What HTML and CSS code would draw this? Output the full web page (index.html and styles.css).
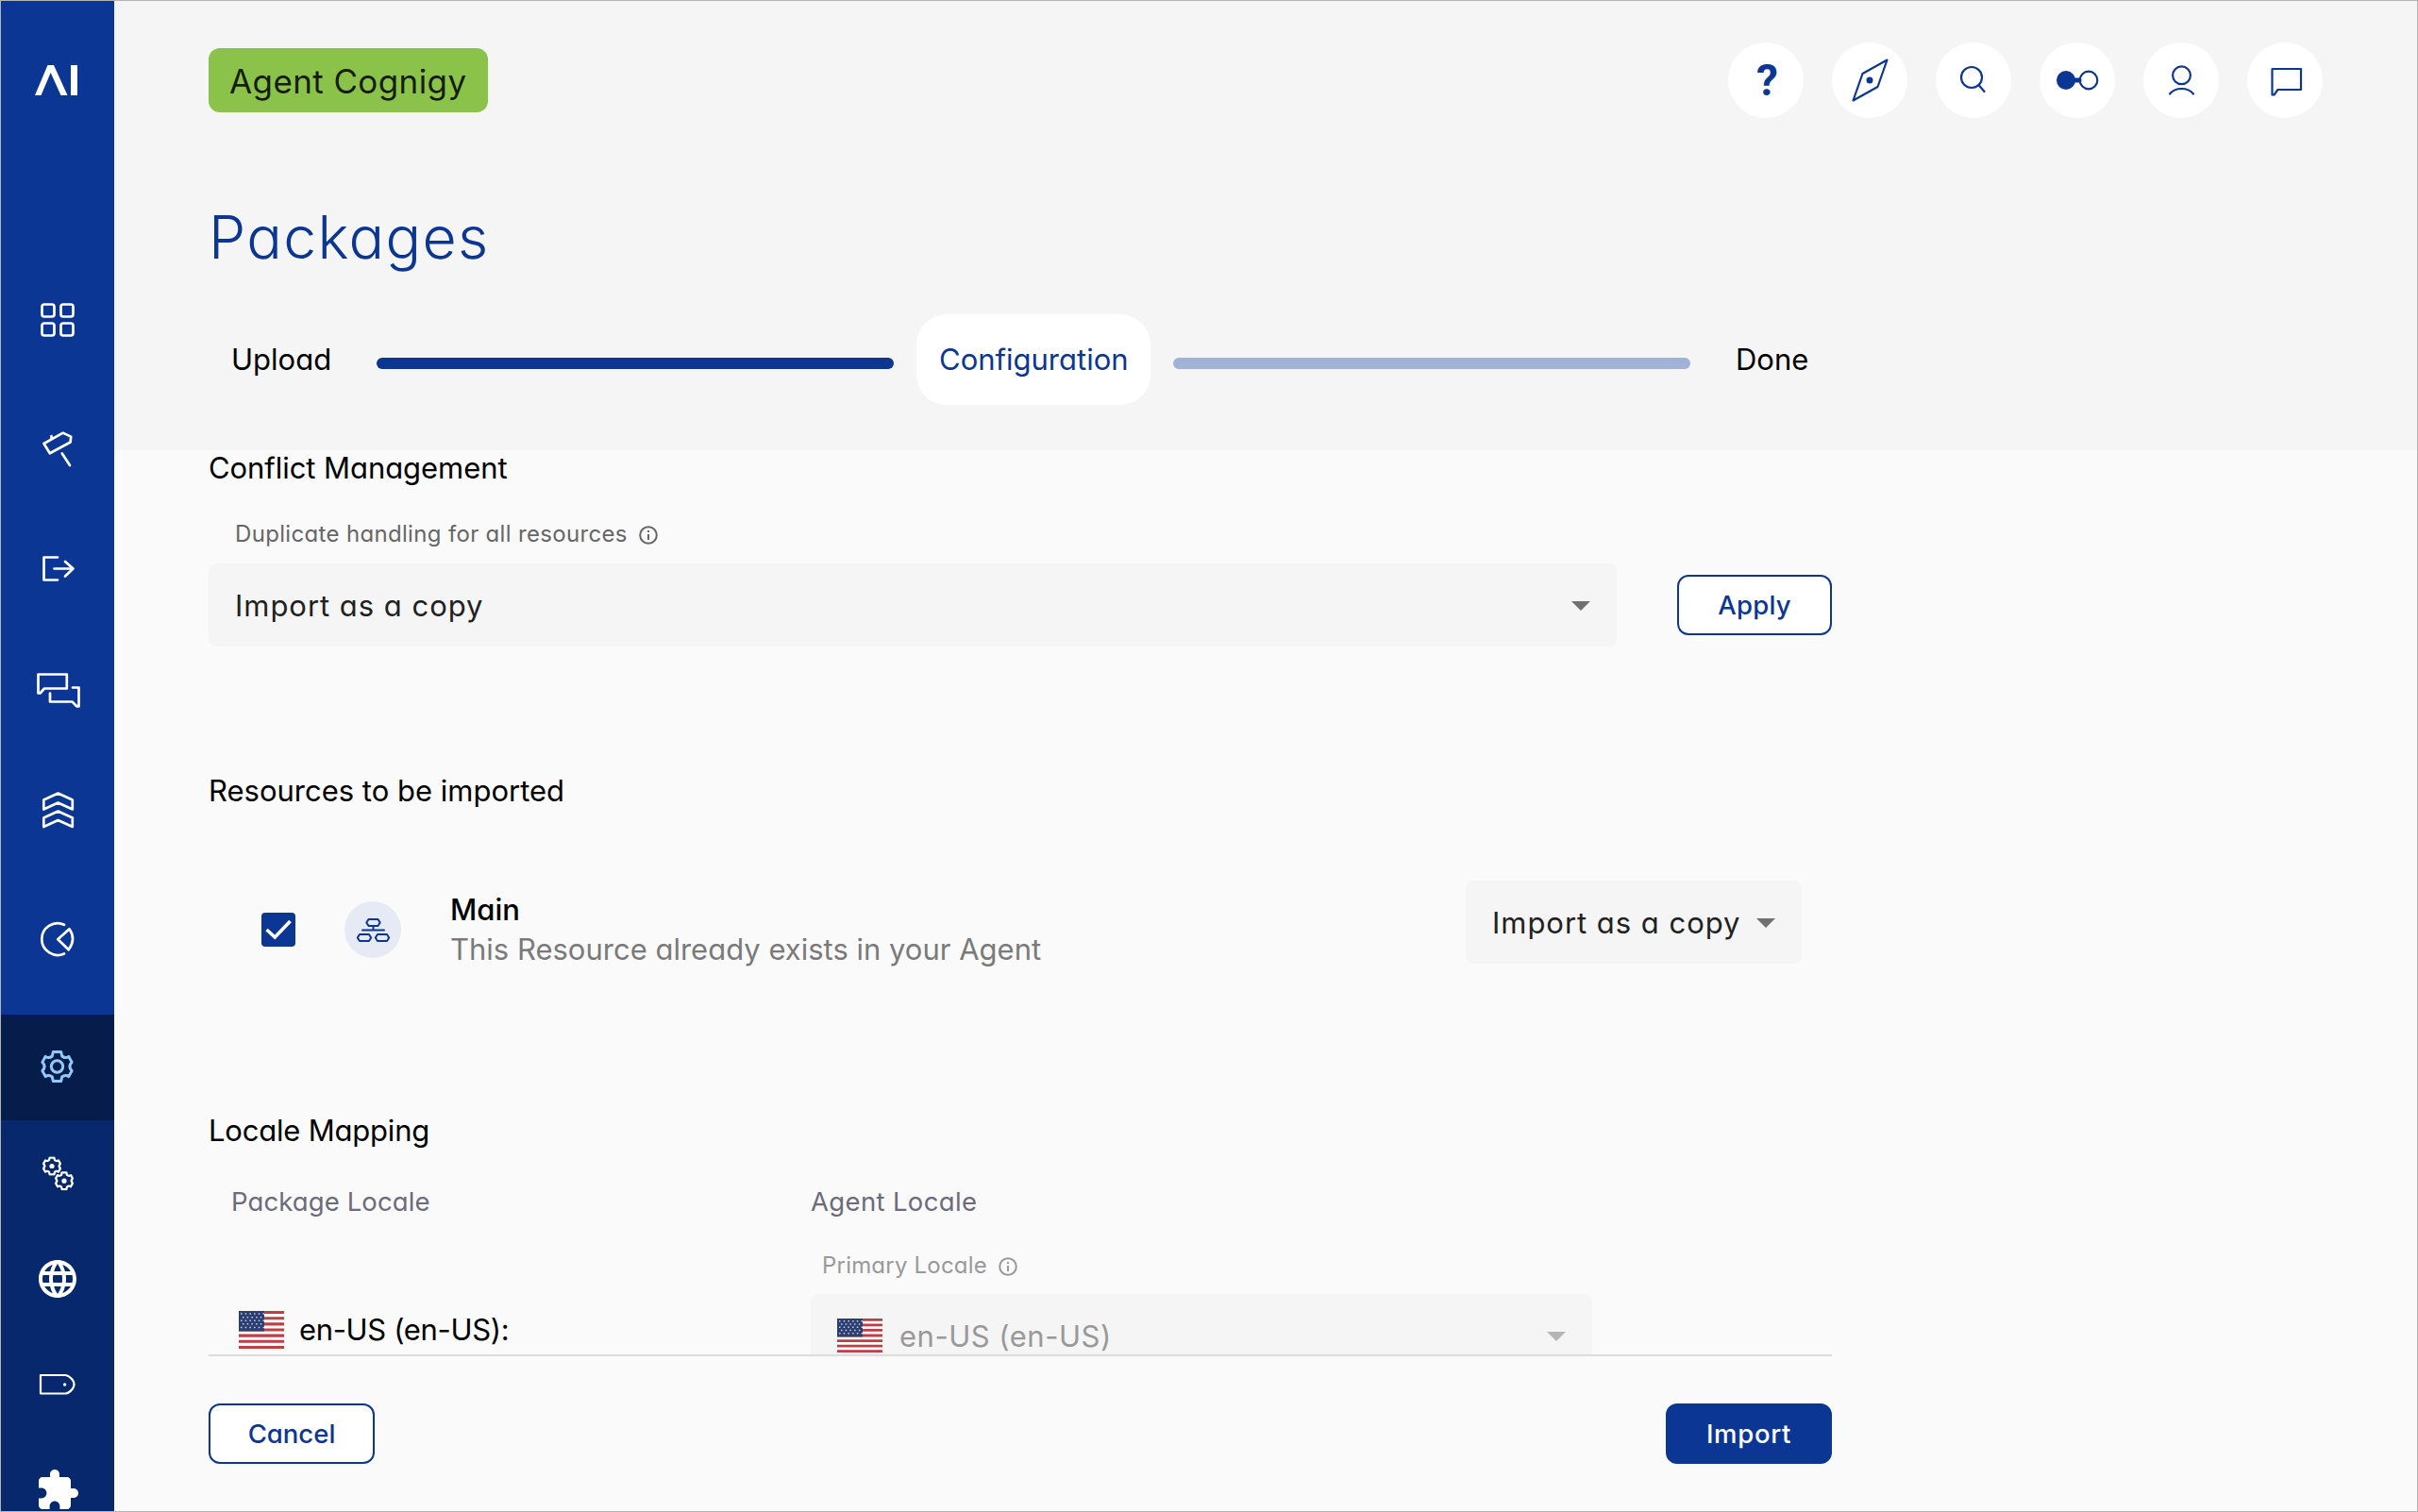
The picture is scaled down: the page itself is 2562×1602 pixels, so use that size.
FILE: index.html
```html
<!DOCTYPE html>
<html lang="en">
<head>
<meta charset="utf-8">
<title>Packages</title>
<link rel="stylesheet" href="styles.css">
</head>
<body>
<svg class="defs" width="0" height="0" aria-hidden="true">
  <symbol id="flag-us" viewBox="0 0 48 39" preserveAspectRatio="none">
    <rect width="48" height="39" fill="#fff"/>
    <path d="M0 1.5h48M0 7.5h48M0 13.5h48M0 19.5h48M0 25.5h48M0 31.5h48M0 37.5h48" stroke="#bf3f47" stroke-width="3"/>
    <rect width="27" height="21" fill="#2b3f73"/>
    <path d="M2 3h25M4 6.5h21M2 10h25M4 13.5h21M2 17h25" stroke="#c9cfdf" stroke-width="1.5" stroke-dasharray="1.5 3.2"/>
  </symbol>
  <symbol id="info" viewBox="0 0 20 20">
    <circle cx="10" cy="10" r="8.8" fill="none" stroke="currentColor" stroke-width="2"/>
    <path d="M10 9v6M10 5v2" stroke="currentColor" stroke-width="2"/>
  </symbol>
  <symbol id="gear" viewBox="-18 -18 36 36">
    <path d="M-4.2-15.5H4.2L5.2-11Q8.5-8.2 12.3-10.6L15.6-4.6Q11.2 0 15.6 4.6L12.3 10.6Q8.5 8.2 5.2 11L4.2 15.5H-4.2L-5.2 11Q-8.5 8.2-12.3 10.6L-15.6 4.6Q-11.2 0-15.6-4.6L-12.3-10.6Q-8.5-8.2-5.2-11Z"/>
  </symbol>
</svg>
<div class="app">
  <nav class="sidebar">
    <div class="nav-main">
      <svg class="logo" viewBox="37 61 48 48"><path fill="#fff" d="M37 101 50.5 69H57L71.5 101H64.5L53.7 77 43.5 101ZM75 69h7v32h-7Z"/></svg>
      <svg class="n1" viewBox="37 315 48 48"><rect x="44.5" y="322.5" width="13" height="13" rx="2.5"/><rect x="64.5" y="322.5" width="13" height="13" rx="2.5"/><rect x="44.5" y="342.5" width="13" height="13" rx="2.5"/><rect x="64.5" y="342.5" width="13" height="13" rx="2.5"/></svg>
      <svg class="n2" viewBox="37 452 48 48"><path d="M46.5 470 66.7 458.6 75.2 462.6 74.6 468.5 52.8 480.3ZM54.5 462v2.5M65.8 480.5 74 493"/></svg>
      <svg class="n3" viewBox="37 578 48 48"><path d="M61 590.5H46.5V614.5H61M57.5 602.5H77.5M69 595 77.5 602.5 69 610.5"/></svg>
      <svg class="n4" viewBox="37 707 48 48"><path d="M40.5 714.5H70.8V729.5H47L42.5 734.5H40.5ZM77 728.5H83.5V748.5H81.5L76.5 743.5H53V734.5"/></svg>
      <svg class="n5" viewBox="37 834 48 48"><path d="M46.3 847.5 61.5 840.5 76.8 847.5V857.5L61.5 850.5 46.3 857.5ZM46.3 866.5 61.5 859.5 76.8 866.5V876L61.5 869 46.3 876Z"/></svg>
      <svg class="n6" viewBox="37 971 48 48"><path d="M68 979.8A16.8 16.8 0 1 0 68 1010.4M61.3 995.3 73.5 984.3Q81 995 72.7 1006.3Z"/></svg>
    </div>
    <div class="nav-active">
      <svg class="cog" viewBox="37 1106 48 48"><use href="#gear" x="42.5" y="1112" width="36" height="36"/><circle cx="60.5" cy="1130" r="6.2"/></svg>
    </div>
    <div class="nav-sub">
      <svg viewBox="37 1219 48 48"><g class="thick"><use href="#gear" x="44.7" y="1225.2" width="20.6" height="20.6"/><use href="#gear" x="57.7" y="1240.9" width="20.6" height="20.6"/></g><circle class="dot" cx="55" cy="1235.5" r="2.6"/><circle class="dot" cx="68" cy="1251.2" r="2.6"/></svg>
      <svg viewBox="0 0 24 24"><path class="solid" d="M11.99 2C6.47 2 2 6.48 2 12s4.47 10 9.99 10C17.52 22 22 17.52 22 12S17.52 2 11.99 2zm6.93 6h-2.95c-.32-1.25-.78-2.45-1.38-3.56 1.84.63 3.37 1.91 4.33 3.56zM12 4.04c.83 1.2 1.48 2.53 1.91 3.96h-3.82c.43-1.43 1.08-2.76 1.91-3.96zM4.26 14C4.1 13.36 4 12.69 4 12s.1-1.36.26-2h3.38c-.08.66-.14 1.32-.14 2 0 .68.06 1.34.14 2H4.26zm.82 2h2.95c.32 1.25.78 2.45 1.38 3.56-1.84-.63-3.37-1.9-4.33-3.56zm2.95-8H5.08c.96-1.66 2.49-2.93 4.33-3.56C8.81 5.55 8.35 6.75 8.03 8zM12 19.96c-.83-1.2-1.48-2.53-1.91-3.96h3.82c-.43 1.43-1.08 2.76-1.91 3.96zM14.34 14H9.66c-.09-.66-.16-1.32-.16-2 0-.68.07-1.35.16-2h4.68c.09.65.16 1.32.16 2 0 .68-.07 1.34-.16 2zm.25 5.56c.6-1.11 1.06-2.31 1.38-3.56h2.95c-.96 1.65-2.49 2.93-4.33 3.56zM16.36 14c.08-.66.14-1.32.14-2 0-.68-.06-1.34-.14-2h3.38c.16.64.26 1.31.26 2s-.1 1.36-.26 2h-3.38z"/></svg>
      <svg viewBox="37 1443 48 48"><path class="thin" d="M43 1457H69.5Q73 1457.3 76.5 1461.5Q80.5 1467 76.5 1472Q73 1476.2 69.5 1476.5H43Z"/><circle class="dot" cx="68.6" cy="1467" r="1.7"/></svg>
      <svg viewBox="0 0 24 24"><path class="solid" d="M20.5 11H19V7c0-1.1-.9-2-2-2h-4V3.5C13 2.12 11.88 1 10.5 1S8 2.12 8 3.5V5H4c-1.1 0-1.99.9-1.99 2v3.8H3.5c1.49 0 2.7 1.21 2.7 2.7s-1.21 2.7-2.7 2.7H2V20c0 1.1.9 2 2 2h3.8v-1.5c0-1.49 1.21-2.7 2.7-2.7 1.49 0 2.7 1.21 2.7 2.7V22H17c1.1 0 2-.9 2-2v-4h1.5c1.38 0 2.5-1.12 2.5-2.5S21.88 11 20.5 11z"/></svg>
    </div>
  </nav>
  <main class="main">
    <header class="header">
      <div class="topbar">
        <div class="badge">Agent Cognigy</div>
        <div class="actions">
          <button class="circle help">?</button>
          <button class="circle"><svg viewBox="1941 45 80 80"><path d="M1999.5 63.5 1973.5 78 1963.5 106.5 1989.5 92Z"/><circle class="dot" cx="1981" cy="85" r="3.5"/></svg></button>
          <button class="circle"><svg viewBox="2051 45 80 80"><circle cx="2089" cy="82" r="11"/><path d="M2096.5 90 2102.5 97"/></svg></button>
          <button class="circle"><svg viewBox="2161 45 80 80"><circle class="dot" cx="2189" cy="85" r="10"/><path class="bar" d="M2195 85h8"/><circle cx="2213" cy="85" r="9.3"/></svg></button>
          <button class="circle"><svg viewBox="2271 45 80 80"><circle cx="2311.5" cy="79.8" r="9.4"/><path d="M2299 99.5Q2303.5 94 2311.5 94T2324 99.5"/></svg></button>
          <button class="circle"><svg viewBox="2381 45 80 80"><path d="M2407.5 73H2438V95H2413.5L2409.5 100.5H2407.5Z"/></svg></button>
        </div>
      </div>
      <h1 class="title">Packages</h1>
      <div class="stepper">
        <div class="step step-upload">Upload</div>
        <div class="progress done"></div>
        <div class="step current">Configuration</div>
        <div class="progress"></div>
        <div class="step step-done">Done</div>
      </div>
    </header>
    <section class="content">
      <h2 class="heading conflict">Conflict Management</h2>
      <div class="label"><span>Duplicate handling for all resources</span><svg class="info"><use href="#info"/></svg></div>
      <div class="conflict-row">
        <div class="select"><span>Import as a copy</span><i class="arrow"></i></div>
        <button class="btn apply">Apply</button>
      </div>
      <h2 class="heading resources">Resources to be imported</h2>
      <div class="resource">
        <svg class="checkbox" viewBox="277 967 36 36"><rect x="277" y="967" width="36" height="36" rx="4" fill="#0b3694"/><path d="M282.5 985 291.3 993 307.5 976" fill="none" stroke="#fff" stroke-width="3.6"/></svg>
        <div class="flow"><svg viewBox="365 955 60 60"><path d="M390.5 974h10l2.2 3.5-2.2 3.5h-10l-2.2-3.5ZM395.5 981v4.500M384 985.500h23M381 990h10l2.200 3.500-2.200 3.500h-10l-2.200-3.500ZM400 990h10l2.200 3.500-2.200 3.500h-10l-2.200-3.500Z"/></svg></div>
        <div class="resource-text">
          <div class="name">Main</div>
          <div class="note">This Resource already exists in your Agent</div>
        </div>
        <div class="select small"><span>Import as a copy</span><i class="arrow"></i></div>
      </div>
      <h2 class="heading locale">Locale Mapping</h2>
      <div class="locales">
        <div class="pkg">
          <div class="col-head">Package Locale</div>
          <div class="pkg-row"><svg class="flag"><use href="#flag-us"/></svg><span>en-US (en-US):</span></div>
        </div>
        <div class="agent">
          <div class="col-head">Agent Locale</div>
          <div class="label muted"><span>Primary Locale</span><svg class="info"><use href="#info"/></svg></div>
          <div class="select disabled"><svg class="flag"><use href="#flag-us"/></svg><span>en-US (en-US)</span><i class="arrow"></i></div>
        </div>
      </div>
    </section>
    <footer class="footer">
      <button class="btn">Cancel</button>
      <button class="btn primary">Import</button>
    </footer>
  </main>
</div>
</body>
</html>
```
FILE: styles.css
```css
* { box-sizing: border-box; }
body {
  margin: 0;
  font-family: Inter, "Open Sans", sans-serif;
  font-feature-settings: "cv11";
  color: #000;
}
.defs { position: absolute; }
.app {
  display: grid;
  grid-template-columns: 120px 1fr;
  width: 2562px;
  height: 1602px;
  border: 1px solid #b4b4b4;
  background: #fafafa;
  overflow: hidden;
  white-space: nowrap;
}
h1, h2 { margin: 0; font-weight: 400; }
button { font: inherit; font-feature-settings: inherit; margin: 0; padding: 0; border: 0; background: none; }

/* Sidebar */
.sidebar { display: flex; flex-direction: column; height: 1600px; overflow: hidden; background: #0b3694; color: #fff; }
.sidebar svg { display: block; flex: none; width: 48px; height: 48px; margin-left: 36px; fill: none; stroke: currentColor; stroke-width: 2.7; stroke-linecap: round; stroke-linejoin: round; }
.nav-main { flex: none; height: 1074px; padding-top: 60px; }
.sidebar .logo { stroke: none; }
.sidebar .n1 { margin-top: 206px; }
.sidebar .n2 { margin-top: 89px; }
.sidebar .n3 { margin-top: 78px; }
.sidebar .n4 { margin-top: 81px; }
.sidebar .n5 { margin-top: 79px; }
.sidebar .n6 { margin-top: 89px; }
.nav-active { flex: none; height: 112px; padding-top: 31px; background: #061c4a; color: #90caf9; }
.sidebar .cog { stroke-width: 3; }
.sidebar .thick { stroke-width: 3.9; }
.nav-sub { flex: none; display: flex; flex-direction: column; gap: 64px; height: 414px; padding-top: 32px; background: #07286d; overflow: hidden; }
.sidebar .solid, .sidebar .dot { fill: currentColor; stroke: none; }
.sidebar .thin { stroke-width: 2.2; }

/* Header */
.header { height: 476px; padding: 44px 100px 0; background: #f5f5f5; }
.topbar { display: flex; align-items: center; justify-content: space-between; height: 80px; }
.badge { width: 296px; height: 68px; padding-left: 22px; border-radius: 12px; background: #8bc34a; color: rgba(0, 0, 0, .87); font-size: 35px; line-height: 70px; letter-spacing: .4px; }
.actions { display: flex; gap: 30px; }
.circle { display: block; width: 80px; height: 80px; border-radius: 50%; background: #fff; color: #0b3694; }
.circle svg { display: block; width: 80px; height: 80px; fill: none; stroke: #0b3694; stroke-width: 2.2; stroke-linecap: round; stroke-linejoin: round; }
.circle .dot { fill: #0b3694; stroke: none; }
.circle .bar { stroke-width: 5; }
.help { padding-left: 3px; font: 700 46px/80px Roboto, sans-serif; }
.title { margin-top: 86px; color: #0b3694; font-size: 62.5px; font-weight: 300; line-height: 80px; letter-spacing: 1.35px; }
.stepper { display: flex; align-items: center; gap: 24px; width: 1720px; height: 96px; margin-top: 42px; font-size: 31px; line-height: 96px; }
.step { flex: none; height: 96px; padding-left: 24px; }
.step-upload { width: 154px; }
.step-done { width: 126px; }
.current { width: 248px; border-radius: 32px; background: #fff; color: #0b3694; }
.progress { flex: 1; height: 12px; margin-top: 8px; border-radius: 6px; background: #a2b1d6; }
.progress.done { background: #0b3694; }

/* Content */
.content { width: 1820px; height: 958px; padding-left: 100px; overflow: hidden; }
.heading { font-size: 31px; line-height: 40px; }
.conflict { line-height: 38px; letter-spacing: -.06px; }
.label { display: flex; align-items: center; gap: 12px; height: 32px; margin: 35px 0 15px; padding-left: 28px; color: #666; font-size: 24px; line-height: 32px; letter-spacing: .33px; }
.info { display: block; width: 20px; height: 20px; margin-top: 2px; }
.conflict-row { display: flex; align-items: center; gap: 64px; }
.select { display: flex; align-items: center; flex: 1; height: 88px; padding: 0 28px; border-radius: 8px; background: #f5f5f5; color: #212121; font-size: 31px; letter-spacing: .97px; }
.arrow { width: 20px; height: 10px; margin-left: auto; margin-top: 2px; background: #717171; clip-path: polygon(0 0, 100% 0, 50% 100%); }
.btn { display: block; flex: none; width: 176px; height: 64px; border: 2px solid #0b3694; border-radius: 12px; background: #fff; color: #0b3694; font-size: 27.5px; font-weight: 500; line-height: 60px; text-align: center; }
.apply { width: 164px; letter-spacing: .2px; }
.primary { background: #0b3694; color: #fff; letter-spacing: .7px; }
.resources { margin-top: 133px; }
.resource { display: flex; align-items: center; height: 104px; margin-top: 75px; padding: 0 32px 0 56px; }
.checkbox { display: block; width: 36px; height: 36px; }
.flow { width: 60px; height: 60px; margin: 0 52px; border-radius: 50%; background: #e6eaf5; }
.flow svg { display: block; width: 60px; height: 60px; fill: none; stroke: #0b3694; stroke-width: 2; stroke-linecap: round; stroke-linejoin: round; }
.resource-text { flex: 1; font-size: 31px; line-height: 42px; }
.name { font-weight: 500; }
.note { color: #7a7a7a; }
.select.small { flex: none; align-self: flex-start; width: 356px; }
.locale { margin-top: 141px; letter-spacing: -.2px; }
.locales { display: grid; grid-template-columns: 638px 828px; margin-top: 37px; }
.col-head { color: #6b6b7b; font-size: 27.5px; line-height: 36px; letter-spacing: .1px; }
.agent .col-head { letter-spacing: .35px; }
.pkg .col-head { padding-left: 24px; }
.pkg-row { display: flex; align-items: center; gap: 16px; margin-top: 98px; padding-left: 32px; font-size: 31px; line-height: 40px; letter-spacing: -.35px; }
.flag { display: block; flex: none; width: 48px; height: 40px; }
.label.muted { height: 32px; margin: 34px 0 14px; padding-left: 12px; color: #999; letter-spacing: .2px; }
.select.disabled { color: #999; gap: 18px; letter-spacing: .5px; }
.disabled .flag { height: 36px; }
.disabled .arrow { background: #b6b6b6; }

/* Footer */
.footer { display: flex; justify-content: space-between; width: 1720px; height: 165px; margin-left: 100px; padding-top: 50px; border-top: 2px solid #dcdcdc; }
```
